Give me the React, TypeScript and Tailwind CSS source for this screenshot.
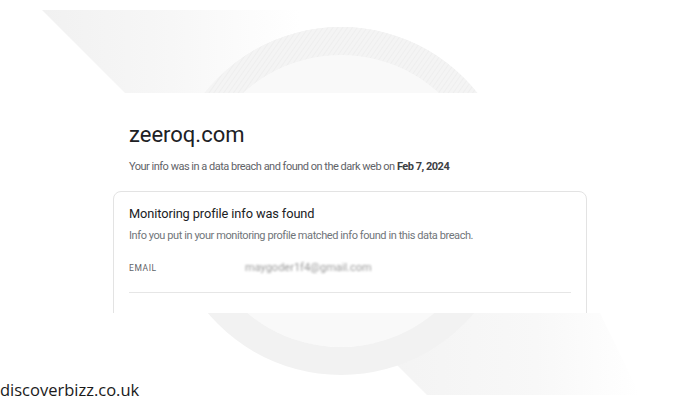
import React from 'react';

const sans = { fontFamily: 'Roboto, "Liberation Sans", sans-serif' };

function Backdrop() {
  return (
    <svg className="absolute inset-0" width="700" height="400" viewBox="0 0 700 400">
      <defs>
        <linearGradient id="bandTop" x1="42" y1="0" x2="300" y2="0" gradientUnits="userSpaceOnUse">
          <stop offset="0" stopColor="#f1f1f1" />
          <stop offset="0.5" stopColor="#f7f7f7" />
          <stop offset="1" stopColor="#ffffff" />
        </linearGradient>
        <linearGradient id="bandBottom" x1="380" y1="0" x2="640" y2="0" gradientUnits="userSpaceOnUse">
          <stop offset="0" stopColor="#f3f3f3" />
          <stop offset="0.6" stopColor="#f8f8f8" />
          <stop offset="1" stopColor="#ffffff" />
        </linearGradient>
        <pattern id="hatch" width="4" height="4" patternUnits="userSpaceOnUse" patternTransform="rotate(35)">
          <rect width="4" height="4" fill="#f4f4f4" />
          <line x1="0" y1="0" x2="0" y2="4" stroke="#ebebeb" strokeWidth="1.2" />
        </pattern>
        <clipPath id="ringClip">
          <path
            clipRule="evenodd"
            d="M341 27a174 174 0 1 0 0.01 0zM341 55a146 146 0 1 1 -0.01 0z"
          />
        </clipPath>
      </defs>
      <polygon points="42,10 300,10 300,93 125,93" fill="url(#bandTop)" />
      <polygon points="345,313 600,313 640,395 427,395" fill="url(#bandBottom)" />
      <circle cx="341" cy="201" r="146" fill="#f9f9f9" />
      <path
        fillRule="evenodd"
        fill="#f2f2f2"
        d="M341 27a174 174 0 1 0 0.01 0zM341 55a146 146 0 1 1 -0.01 0z"
      />
      <rect x="150" y="0" width="400" height="93" fill="url(#hatch)" clipPath="url(#ringClip)" />
    </svg>
  );
}

export default function App() {
  return (
    <div className="relative w-[700px] h-[400px] bg-white overflow-hidden">
      <Backdrop />
      <div className="relative pt-[93px]">
        <div className="ml-[60px] w-[580px] h-[220px] bg-white overflow-hidden" style={sans}>
          <div className="pl-[69px] pt-[28px]">
            <h1 className="text-[22px] leading-[28px] text-[#202124]">zeeroq.com</h1>
            <p className="mt-[10px] text-[11px] leading-[16px] text-[#5f6368] tracking-[-0.5px]">
              Your info was in a data breach and found on the dark web on{' '}
              <span className="font-bold text-[#3c4043]">Feb 7, 2024</span>
            </p>
          </div>
          <div className="mt-[16px] ml-[53px] w-[474px] rounded-lg border border-[#e3e3e3] px-[15px] pt-[13px]">
            <h2 className="text-[12.8px] leading-[18px] text-[#202124] tracking-[-0.1px]">
              Monitoring profile info was found
            </h2>
            <p className="mt-[5px] text-[11px] leading-[16px] text-[#70757a] tracking-[-0.42px]">
              Info you put in your monitoring profile matched info found in this data breach.
            </p>
            <div className="mt-[17px] flex items-center h-[14px]">
              <span className="w-[116px] text-[8.5px] tracking-[0.6px] text-[#5f6368]">EMAIL</span>
              <span className="text-[11px] text-[#9a9a9a] blur-[1.2px]">maygoder1f4@gmail.com</span>
            </div>
            <div className="mt-[17px] border-t border-[#e6e6e6]" />
            <p className="mt-[17px] text-[12.8px] leading-[18px] text-[#202124] tracking-[-0.1px]">
              Other info was found that isn't in your monitoring profile
            </p>
          </div>
        </div>
        <p
          className="mt-[65px] text-[16.5px] leading-[24px] text-[#1a1a1a]"
          style={{ fontFamily: '"Open Sans", "Noto Sans", sans-serif' }}
        >
          discoverbizz.co.uk
        </p>
      </div>
    </div>
  );
}
